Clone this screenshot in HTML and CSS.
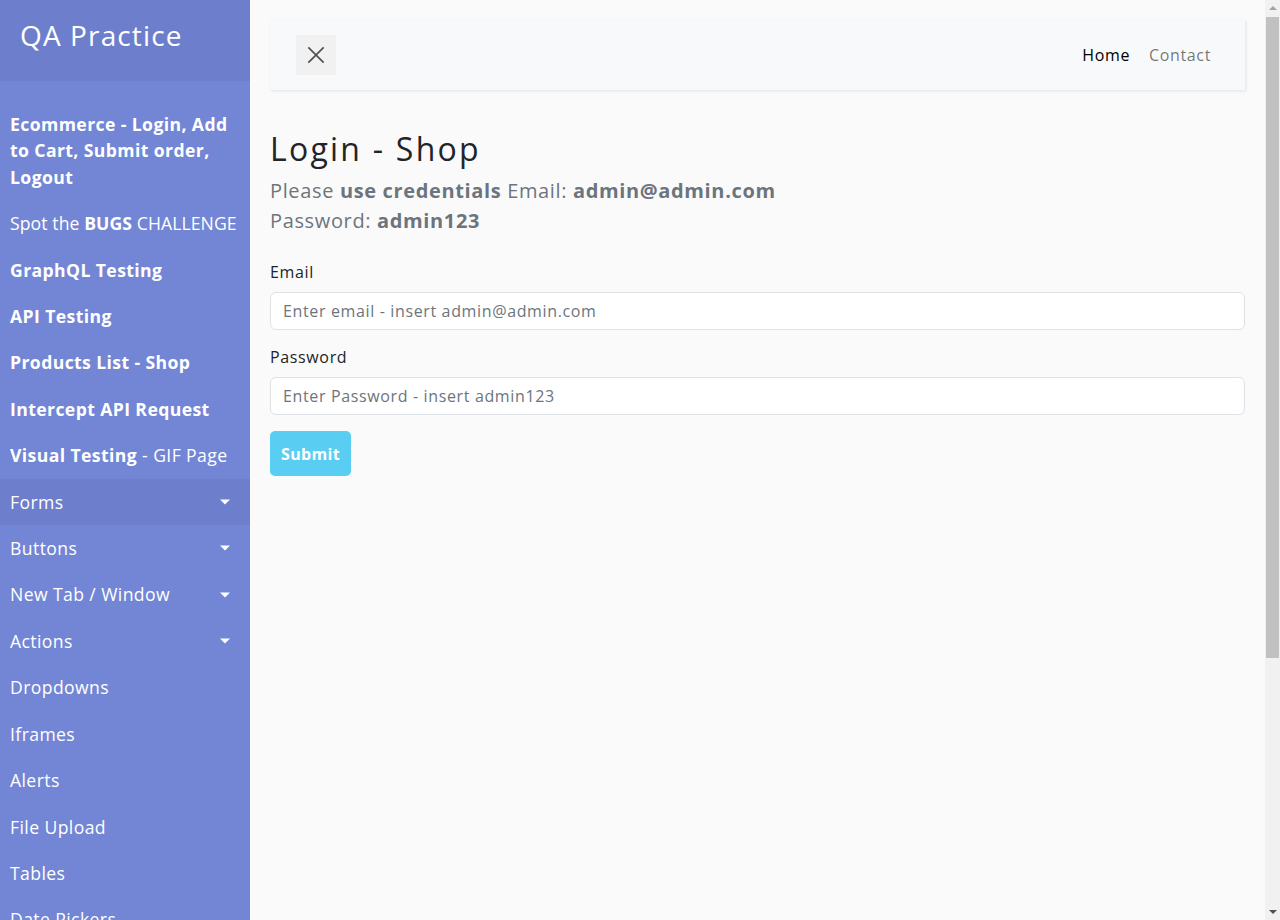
FILE: index.html
```html
<!DOCTYPE html>
<html lang="en">
<head>
<meta charset="utf-8">
<title>QA Practice - Login Shop</title>
<link rel="stylesheet" href="styles.css">
</head>
<body>
<div class="app">
  <nav class="sidebar">
    <div class="sidebar-header"><h3>QA Practice</h3></div>
    <ul class="menu">
      <li><a href="#"><b>Ecommerce - Login, Add to Cart, Submit order, Logout</b></a></li>
      <li><a href="#" class="tight">Spot the <b>BUGS</b> CHALLENGE</a></li>
      <li><a href="#"><b>GraphQL Testing</b></a></li>
      <li><a href="#"><b>API Testing</b></a></li>
      <li><a href="#"><b>Products List - Shop</b></a></li>
      <li><a href="#"><b>Intercept API Request</b></a></li>
      <li><a href="#"><b>Visual Testing</b> - GIF Page</a></li>
      <li class="active"><a href="#" class="dropdown-toggle">Forms</a></li>
      <li><a href="#" class="dropdown-toggle">Buttons</a></li>
      <li><a href="#" class="dropdown-toggle">New Tab / Window</a></li>
      <li><a href="#" class="dropdown-toggle">Actions</a></li>
      <li><a href="#">Dropdowns</a></li>
      <li><a href="#">Iframes</a></li>
      <li><a href="#">Alerts</a></li>
      <li><a href="#">File Upload</a></li>
      <li><a href="#">Tables</a></li>
      <li><a href="#">Date Pickers</a></li>
    </ul>
  </nav>
  <main class="content">
    <div class="topbar">
      <button class="toggle" type="button" aria-label="Toggle">
        <svg width="20" height="20" viewBox="0 0 20 20"><path d="M1.5 1.5 L18.5 18.5 M18.5 1.5 L1.5 18.5" stroke="#4f4f4f" stroke-width="1.8" fill="none"/></svg>
      </button>
      <div class="navlinks">
        <a href="#" class="navlink current">Home</a>
        <a href="#" class="navlink">Contact</a>
      </div>
    </div>
    <h2 class="title">Login - Shop</h2>
    <p class="lead">Please <b>use credentials</b> Email: <b>admin@admin.com</b><br>Password: <b>admin123</b></p>
    <form class="form">
      <div class="group">
        <label for="email">Email</label>
        <input id="email" type="email" placeholder="Enter email - insert admin@admin.com">
      </div>
      <div class="group">
        <label for="password">Password</label>
        <input id="password" type="password" placeholder="Enter Password - insert admin123">
      </div>
      <button type="button" class="submit">Submit</button>
    </form>
  </main>
  <div class="scrollbar" aria-hidden="true">
    <span class="arrow up"></span>
    <div class="track"><div class="thumb"></div></div>
    <span class="arrow down"></span>
  </div>
</div>
</body>
</html>
```
FILE: styles.css
```css
* { box-sizing: border-box; }
html, body { margin: 0; padding: 0; }
body {
  font-family: "Open Sans", "Liberation Sans", sans-serif;
  background: #fafafa;
  color: #212529;
  font-size: 16px;
  line-height: 1.5;
}
.app {
  display: flex;
  align-items: stretch;
  height: 100vh;
  overflow: hidden;
}
.sidebar {
  width: 250px;
  min-width: 250px;
  background: #7386d5;
  color: #fff;
  overflow: hidden;
  letter-spacing: 0.025em;
}
.sidebar-header {
  background: #6d7fcc;
  padding: 19px 20px 20px;
  height: 81px;
}
.sidebar-header h3 {
  margin: 0;
  font-size: 28px;
  font-weight: 400;
  line-height: 1.2;
  color: #fff;
  letter-spacing: 0.04em;
}
.menu { list-style: none; margin: 0; padding: 20px 0; }
.menu li a {
  display: block;
  position: relative;
  padding: 10px;
  font-size: 17.6px;
  line-height: 26.4px;
  color: #fff;
  text-decoration: none;
}
.menu li a.tight { letter-spacing: 0.005em; white-space: nowrap; }
.menu li a b { font-weight: 700; }
.menu li.active a { background: #6d7fcc; }
.dropdown-toggle::after {
  content: "";
  position: absolute;
  right: 20px;
  top: 50%;
  transform: translateY(-50%);
  border-top: 5px solid #fff;
  border-left: 5px solid transparent;
  border-right: 5px solid transparent;
}
.content {
  flex: 1;
  padding: 20px;
  min-width: 0;
  letter-spacing: 0.04em;
}
.topbar {
  display: flex;
  align-items: center;
  justify-content: space-between;
  height: 70px;
  padding: 0 34px 0 26px;
  background: #f8f9fa;
  box-shadow: 1px 1px 3px rgba(0,0,0,0.1);
  margin-bottom: 40px;
}
.toggle {
  width: 40px;
  height: 40px;
  border: 0;
  background: #f1f1f1;
  display: flex;
  align-items: center;
  justify-content: center;
  padding: 0;
}
.toggle svg { width: 18px; height: 18px; }
.navlinks { display: flex; gap: 19px; }
.navlink {
  color: rgba(0,0,0,0.55);
  text-decoration: none;
  font-size: 16px;
}
.navlink.current { color: #000; }
.title {
  margin: 0 0 8px;
  font-size: 32px;
  font-weight: 400;
  line-height: 1.2;
  color: #212529;
  letter-spacing: 0.07em;
}
.lead {
  margin: 0 0 24px;
  font-size: 20px;
  font-weight: 400;
  line-height: 30px;
  color: #6c757d;
}
.lead b { font-weight: 700; }
.group { margin-bottom: 15px; }
.group label { display: block; margin-bottom: 8px; font-size: 16px; line-height: 24px; }
.group input {
  display: block;
  width: 100%;
  height: 38px;
  padding: 6px 12px;
  font: inherit;
  font-size: 16px;
  letter-spacing: 0.04em;
  border: 1px solid #dee2e6;
  border-radius: 6px;
  background: #fff;
  color: #212529;
}
.group input::placeholder { color: #6c757d; }
.submit {
  margin-top: 1px;
  height: 45px;
  padding: 0 11px;
  border: 0;
  border-radius: 5px;
  background: #5acdf2;
  color: #fff;
  font: inherit;
  font-weight: 700;
  font-size: 16px;
  letter-spacing: 0.02em;
}
.scrollbar {
  width: 15px;
  min-width: 15px;
  background: #f1f1f1;
  display: flex;
  flex-direction: column;
  align-items: center;
}
.arrow {
  width: 0;
  height: 0;
  border-left: 4px solid transparent;
  border-right: 4px solid transparent;
}
.arrow.up { border-bottom: 4px solid #a3a3a3; margin: 6px 0 7px; }
.arrow.down { border-top: 4px solid #505050; margin: 7px 0 6px; }
.track { flex: 1; width: 100%; padding: 0 1px; }
.thumb { width: 100%; height: 641px; background: #c1c1c1; }
```
